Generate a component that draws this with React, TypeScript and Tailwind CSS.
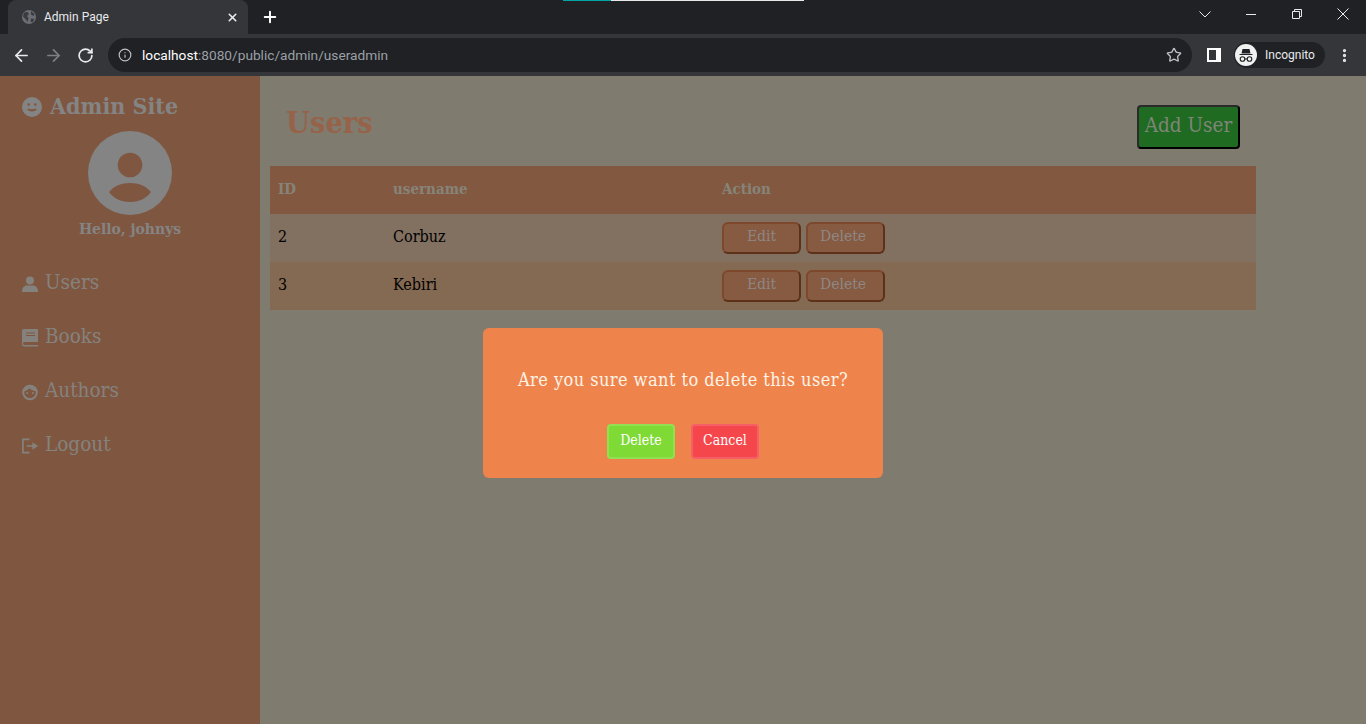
import { ArrowLeft, ArrowRight, RotateCw, Info, Star, X, Plus, MoreVertical } from "lucide-react";

const slab = "font-['DejaVu_Serif_Condensed','DejaVu_Serif',serif]";

function Globe() {
  return (
    <svg width="16" height="16" viewBox="0 0 16 16" className="shrink-0">
      <circle cx="8" cy="8" r="7" fill="#6b6e72" />
      <path d="M3 3.500 6.500 3 8 5 6 7 7.500 9 6.500 13 4.500 10 2 7.500ZM10 2l3.500 3-1 2-2.500-1.500ZM10 9.500l3.500.5-2 3.500-2-1Z" fill="#3a3b40" />
    </svg>
  );
}

function Incognito() {
  return (
    <svg width="22" height="22" viewBox="0 0 22 22" className="shrink-0">
      <circle cx="11" cy="11" r="11" fill="#f1f1f1" />
      <path d="M7.500 5h7l1 4.500h-9ZM4.500 10h13v1h-13Z" fill="#202124" />
      <circle cx="7.500" cy="15" r="2.300" fill="none" stroke="#202124" strokeWidth="1.100" />
      <circle cx="14.500" cy="15" r="2.300" fill="none" stroke="#202124" strokeWidth="1.100" />
      <path d="M9.800 15h2.400" stroke="#202124" strokeWidth="1.100" />
    </svg>
  );
}

function Chrome() {
  return (
    <div className="font-['Roboto',sans-serif]">
      <div className="h-[34px] bg-[#202124] flex relative">
        <div className="absolute top-0 left-[563px] h-px w-[48px] bg-[#00a6a6]" />
        <div className="absolute top-0 left-[611px] h-px w-[193px] bg-[#e8e8e8]" />
        <div className="ml-2 w-[240px] h-[34px] bg-[#35363a] rounded-t-lg flex items-center pl-[13px] pr-[9px] gap-[7px]">
          <Globe />
          <span className="text-xs text-[#e8eaed] flex-1">Admin Page</span>
          <X size={13} strokeWidth={3} className="text-[#e8eaed]" />
        </div>
        <div className="ml-[13px] flex items-center">
          <Plus size={18} strokeWidth={2.600} className="text-white" />
        </div>
        <div className="flex-1" />
        <div className="flex items-center text-[#e8eaed] pr-[17px] pb-[6px]">
          <svg width="12" height="7" viewBox="0 0 12 7" fill="none" stroke="currentColor" className="mr-[35px]">
            <path d="M.5.500 6 6 11.500.500" />
          </svg>
          <svg width="10" height="1" viewBox="0 0 10 1" stroke="currentColor" className="mr-[36px]">
            <path d="M0 .500h10" />
          </svg>
          <svg width="10" height="10" viewBox="0 0 10 10" fill="none" stroke="currentColor" className="mr-[35px]">
            <path d="M.5 2.500h7v7h-7ZM2.500 2.500v-2h7v7h-2" />
          </svg>
          <svg width="12" height="12" viewBox="0 0 12 12" fill="none" stroke="currentColor">
            <path d="M.5.500l11 11M11.500.500l-11 11" />
          </svg>
        </div>
      </div>
      <div className="h-[42px] bg-[#35363a] flex items-center">
        <ArrowLeft size={19} strokeWidth={2.200} className="ml-[12px] text-[#e8eaed]" />
        <ArrowRight size={19} strokeWidth={2.200} className="ml-[13px] text-[#7d7f83]" />
        <RotateCw size={17} strokeWidth={2.400} className="ml-[14px] text-[#e8eaed]" />
        <div className="ml-[14px] w-[1084px] h-[34px] rounded-full bg-[#202124] flex items-center pl-[10px] pr-[10px]">
          <Info size={14} strokeWidth={2} className="text-[#bdc1c6]" />
          <span className="ml-[10px] text-[13.7px] text-white">localhost</span>
          <span className="text-[13.7px] text-[#9aa0a6]">:8080/public/admin/useradmin</span>
          <div className="flex-1" />
          <Star size={16} strokeWidth={2} className="text-[#bdc1c6]" />
        </div>
        <div className="ml-[15px] w-[14px] h-[14px] border-2 border-white flex">
          <div className="w-[7px] bg-transparent" />
          <div className="flex-1 bg-white" />
        </div>
        <div className="ml-[13px] w-[91px] h-[26px] rounded-full bg-[#202124] flex items-center pl-[1px]">
          <Incognito />
          <span className="ml-2 text-xs text-[#e8eaed]">Incognito</span>
        </div>
        <MoreVertical size={17} strokeWidth={2.600} className="ml-[11px] text-[#e8eaed]" />
      </div>
    </div>
  );
}

function NavItem({ icon, label }: { icon: React.ReactNode; label: string }) {
  return (
    <div className="h-[54px] flex items-center pl-[22px] text-[#85827e]">
      <div className="w-[16px] mt-[6px] flex justify-center">{icon}</div>
      <span className="ml-[7px] mt-[3px] text-[20.5px]">{label}</span>
    </div>
  );
}

function Sidebar() {
  return (
    <aside className="w-[260px] bg-[#7f5740] shrink-0 flex flex-col">
      <div className="pl-[22px] pt-[13px] flex items-center h-[45px] text-[#848484]">
        <svg width="20" height="20" viewBox="0 0 20 20" className="shrink-0 mt-[4px]">
          <circle cx="10" cy="10" r="10" fill="currentColor" />
          <circle cx="6.700" cy="7.500" r="1.300" fill="#7f5740" />
          <circle cx="13.300" cy="7.500" r="1.300" fill="#7f5740" />
          <path d="M5 11.500c1 4 9 4 10 0-3 1-7 1-10 0Z" fill="#7f5740" />
        </svg>
        <span className="ml-2 text-[23px] leading-none font-bold">Admin Site</span>
      </div>
      <div className="mt-[10px] flex justify-center">
        <svg width="84" height="84" viewBox="0 0 84 84">
          <circle cx="42" cy="42" r="42" fill="#848484" />
          <circle cx="42" cy="34" r="12.300" fill="#7f5740" />
          <path d="M21 61C26 55 33 52 42 52S58 55 63 61C58 68 50 71 42 71S26 68 21 61Z" fill="#7f5740" />
        </svg>
      </div>
      <div className="mt-[3px] text-center text-[15.5px] leading-[22px] font-bold text-[#848484]">Hello, johnys</div>
      <nav className="mt-[14px] flex flex-col">
        <NavItem
          label="Users"
          icon={
            <svg width="16" height="16" viewBox="0 0 16 16" fill="currentColor">
              <circle cx="8" cy="4.500" r="4" />
              <path d="M0 16c0-4 2-6.500 5-6.500h6c3 0 5 2.500 5 6.500Z" />
            </svg>
          }
        />
        <NavItem
          label="Books"
          icon={
            <svg width="16" height="18" viewBox="0 0 16 18" fill="currentColor">
              <path d="M2 0h14v13H2.500C1.500 13 1 13.700 1 14.500S1.500 16 2.500 16H16v1.500H2C.8 17.500 0 16.500 0 15V2C0 .8.800 0 2 0Z" />
              <path d="M4 3.500h9v1H4ZM4 6h9v1H4Z" fill="#7f5740" />
            </svg>
          }
        />
        <NavItem
          label="Authors"
          icon={
            <svg width="17" height="17" viewBox="0 0 17 17">
              <circle cx="8.500" cy="8.500" r="7.200" fill="none" stroke="currentColor" strokeWidth="2.200" />
              <path d="M2 7c2 0 4-1 6-3 2 2 4 3 7 3V3L8.500 1 3 3Z" fill="currentColor" />
              <circle cx="5.500" cy="9" r="1" fill="currentColor" />
              <circle cx="11.500" cy="9" r="1" fill="currentColor" />
            </svg>
          }
        />
        <NavItem
          label="Logout"
          icon={
            <svg width="17" height="16" viewBox="0 0 17 16" fill="none" stroke="currentColor" strokeWidth="1.800">
              <path d="M8 1H1v14h7M5 8h9" />
              <path d="M11 4v8l6-4Z" fill="currentColor" stroke="none" />
            </svg>
          }
        />
      </nav>
    </aside>
  );
}

function RowButton({ label, extra }: { label: string; extra?: string }) {
  return (
    <button className={`w-[79px] h-[32px] rounded-[6px] bg-[#875a42] border-2 border-t-[#7d482c] border-l-[#7d482c] border-r-[#5c3118] border-b-[#5c3118] text-[#8d8884] text-[15.5px] leading-none pb-[3px] ${extra ?? ""}`}>
      {label}
    </button>
  );
}

function Row({ id, name, bg }: { id: number; name: string; bg: string }) {
  return (
    <div className={`h-[48px] flex items-center text-black text-base ${bg}`}>
      <div className="w-[123px] pl-2 mb-[2px]">{id}</div>
      <div className="w-[329px] mb-[2px]">{name}</div>
      <div className="flex gap-[5px]">
        <RowButton label="Edit" />
        <RowButton label="Delete" extra="pr-[5px]" />
      </div>
    </div>
  );
}

function Modal() {
  return (
    <div className="absolute left-[223px] top-[252px] w-[400px] h-[150px] rounded-[6px] bg-[#ee844c] flex flex-col items-center text-[#fff3e6]">
      <p className="mt-[41px] text-lg leading-[22px] tracking-[0.45px] whitespace-nowrap">Are you sure want to delete this user?</p>
      <div className="mt-[33px] flex gap-4">
        <button className="w-[68px] h-[35px] rounded-[4px] bg-[#80da36] border-2 border-[#91e052] text-white text-sm leading-none pb-[3px]">Delete</button>
        <button className="w-[68px] h-[35px] rounded-[4px] bg-[#f5474b] border-2 border-[#f65f66] text-white text-sm leading-none pb-[3px]">Cancel</button>
      </div>
    </div>
  );
}

export default function App() {
  return (
    <div className={`h-[724px] w-[1366px] overflow-hidden flex flex-col ${slab}`}>
      <Chrome />
      <div className="flex flex-1">
        <Sidebar />
        <main className="relative flex-1 bg-[#7f7b6e] pl-[10px] pr-[110px]">
          <div className="h-[90px] flex items-center justify-between">
            <h1 className="ml-[16px] mt-[4px] text-[30.5px] font-semibold text-[#96634a]">Users</h1>
            <button className="mr-[16px] mt-[12px] w-[103px] h-[44px] rounded-[4px] bg-[#1f6b22] border-2 border-t-[#2a2a2a] border-l-[#2a2a2a] border-r-black border-b-black text-[#7f8578] text-[20.5px] leading-none pb-[4px] whitespace-nowrap">
              Add User
            </button>
          </div>
          <div className="h-[48px] bg-[#835841] flex items-center text-[#868478] text-[15px] font-bold pb-[2px]">
            <div className="w-[123px] pl-2">ID</div>
            <div className="w-[329px]">username</div>
            <div>Action</div>
          </div>
          <Row id={2} name="Corbuz" bg="bg-[#827060]" />
          <Row id={3} name="Kebiri" bg="bg-[#846a52]" />
          <Modal />
        </main>
      </div>
    </div>
  );
}
